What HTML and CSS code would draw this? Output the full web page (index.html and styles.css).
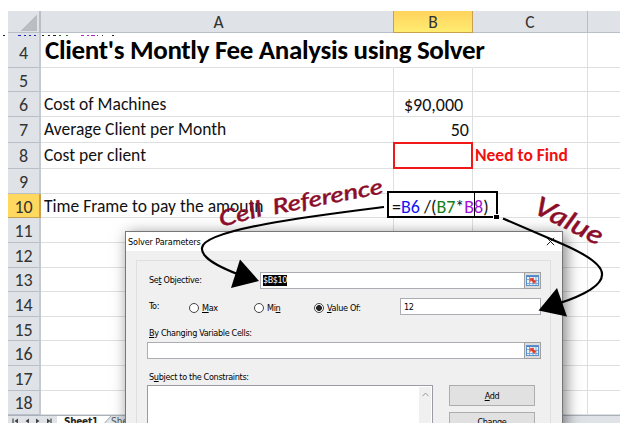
FILE: index.html
```html
<!DOCTYPE html>
<html lang="en">
<head>
<meta charset="utf-8">
<title>Client's Montly Fee Analysis using Solver</title>
<link rel="stylesheet" href="styles.css">
</head>
<body>
<main class="shot">
  <div class="sheet">
    <div class="row head"><b class="corner"></b><span>A</span><span class="active">B</span><span>C</span><span></span></div>
    <div class="row title"><b>4</b><span><strong>Client's Montly Fee Analysis using Solver</strong></span><span></span><span></span><span></span></div>
    <div class="row r5"><b>5</b><span></span><span></span><span></span><span></span></div>
    <div class="row r6"><b>6</b><span>Cost of Machines</span><span class="money">$90,000</span><span></span><span></span></div>
    <div class="row r7"><b>7</b><span class="avg">Average Client per Month</span><span class="num">50</span><span></span><span></span></div>
    <div class="row r8"><b>8</b><span>Cost per client</span><span class="find"></span><span class="need">Need to Find</span><span></span></div>
    <div class="row r9"><b>9</b><span></span><span></span><span></span><span></span></div>
    <div class="row r10"><b class="active">10</b><span class="time">Time Frame to pay the amoutn</span><span></span><span></span><span></span></div>
    <div class="row r11"><b>11</b><span></span><span></span><span></span><span></span></div>
    <div class="row"><b>12</b><span></span><span></span><span></span><span></span></div>
    <div class="row"><b>13</b><span></span><span></span><span></span><span></span></div>
    <div class="row"><b>14</b><span></span><span></span><span></span><span></span></div>
    <div class="row"><b>15</b><span></span><span></span><span></span><span></span></div>
    <div class="row"><b>16</b><span></span><span></span><span></span><span></span></div>
    <div class="row"><b>17</b><span></span><span></span><span></span><span></span></div>
    <div class="row"><b>18</b><span></span><span></span><span></span><span></span></div>
    <div class="tabs">
      <svg class="nav" width="49" height="10" viewBox="0 0 49 10"><path d="M5 2.500v5M43 2.500v5" stroke="#444" stroke-width="1.200"/><path d="M10 2.500v5L6.500 5zM21 2.500v5L17.500 5zM28 2.500v5L31.500 5zM39 2.500v5L42.500 5z" fill="#444"/></svg>
      <span class="tab on">Sheet1</span>
      <svg class="slope" width="9" height="10" viewBox="0 0 9 10"><path d="M0 10 9 0V10z" fill="#e3e7ec"/><path d="M0 10 9 0" stroke="#9aa3ad"/></svg>
      <span class="tab">Sheet2</span>
    </div>
  </div>

  <section class="dialog">
    <header><span>Solver Parameters</span><svg width="9" height="9" viewBox="0 0 9 9"><path d="M.8.8l7.400 7.400M8.200.8.8 8.200" stroke="#222" fill="none"/></svg></header>
    <div class="pane">
      <div class="line objective"><label>Se<u>t</u> Objective:</label><div class="field"><mark>$B$10</mark><i class="pick"><svg width="13" height="11" viewBox="0 0 13 11"><use href="#range"/></svg></i></div></div>
      <div class="line to"><label>To:</label>
        <div class="opt max"><i></i><span><u>M</u>ax</span></div>
        <div class="opt min"><i></i><span>Mi<u>n</u></span></div>
        <div class="opt val"><i class="on"></i><span><u>V</u>alue Of:</span></div>
        <div class="field"><span>12</span></div>
      </div>
      <div class="caption changing"><u>B</u>y Changing Variable Cells:</div>
      <div class="field wide"><i class="pick"><svg width="13" height="11" viewBox="0 0 13 11"><use href="#range"/></svg></i></div>
      <div class="caption subject">S<u>u</u>bject to the Constraints:</div>
      <div class="bottom">
        <div class="list"><div class="scroll"><svg width="7" height="5" viewBox="0 0 7 5"><path d="M.5 4.200 3.500 1l3 3.200" fill="none" stroke="#999"/></svg></div></div>
        <div class="buttons"><div class="button"><span><u>A</u>dd</span></div><div class="button"><span><u>C</u>hange</span></div></div>
      </div>
    </div>
  </section>
</main>

<svg class="notes" width="628" height="442" viewBox="0 0 628 442">
  <defs>
    <g id="range">
      <rect x=".5" y=".5" width="12" height="10" fill="#e9f2fb" stroke="#5c91cb"/>
      <path d="M1 1.500h11" stroke="#4e86c6"/>
      <path d="M1 4.500h3M1 8.500h11M9 5.500h3M3.500 2v8M7 7v3M10 2v8" stroke="#7ba9d8"/>
      <path d="M4 3.500l4-.5-1 1 3 2.500-2 2-2.500-3-1 1z" fill="#df3b2b" stroke="#df3b2b" stroke-width=".5"/>
    </g>
  </defs>
  <path d="M18 35.500h3M24 35.500h2M29 35.500h2M34 35.500h2" stroke="#22c"/>
  <path d="M42 35.500h2M48 35.500h2M53 35.500h3M102 35.500h1M112 35.500h2M3 35.500h2" stroke="#222"/>
  <path d="M59 35.500h2M66 35.500h2" stroke="#272"/>
  <path d="M81 35.500h3M87 35.500h2M91 35.500h4M97 35.500h1" stroke="#a2c"/>
  <path d="M384 207C320 215 203 229 202 248C201 258 219 267 240 275" fill="none" stroke="#000" stroke-width="2.200"/>
  <path d="M240 259.500 259 281 231 288z"/>
  <path d="M503 218.500 560 243Q602 261 602 274Q603 289 557 304" fill="none" stroke="#000" stroke-width="2.200"/>
  <path d="M557 288 538.500 310.500 567 316.500z"/>
  <g class="script">
    <text font-size="22" textLength="44" lengthAdjust="spacingAndGlyphs" transform="translate(221 227) rotate(-15)">Cell</text>
    <text font-size="21" textLength="112" lengthAdjust="spacingAndGlyphs" transform="translate(274 214.500) rotate(-11)">Reference</text>
    <text font-size="26" textLength="74" lengthAdjust="spacingAndGlyphs" transform="translate(532 212) rotate(27)">Value</text>
  </g>
</svg>
<div class="formula"><span>=<em class="blue">B6 </em>/(<em class="green">B7</em>*<em class="purple">B8</em>)</span><i class="caret"></i><i class="handle"></i></div>
</body>
</html>
```
FILE: styles.css
```css
* { box-sizing: border-box; }
body { margin: 0; background: #fff; width: 628px; height: 442px; overflow: hidden; position: relative; font-family: Carlito, Lato, sans-serif; color: #111; }
em, i { font-style: normal; }
.shot { position: relative; margin: 11px 0 0 8px; width: 612px; height: 412px; overflow: hidden; }

.row { display: grid; grid-template-columns: 33px 353px 79px 115px 32px; height: 24.600px; font-size: 17.500px; line-height: 1; white-space: nowrap; }
.row > * { display: flex; align-items: center; padding-top: 2px; border-right: 1px solid #dedfe0; border-bottom: 1px solid #dedfe0; }
.row > b { justify-content: center; background: #dfe3e8; border-right: 2px solid #c5cad1; border-bottom-color: #b8bfc8; font-weight: 400; color: #333; font-size: 18px; }
.row > span:last-child { border-right: 0; }
.row > span:nth-child(2) { padding-left: 3px; }
.head { height: 22px; }
.head > span, .head > b { justify-content: center; background: #dfe2e7; border-color: #b9bfc7; color: #333; }
.head > .active { background: linear-gradient(#ffd35c, #ffec72); border-color: #c9a04e; box-shadow: -1px 0 #c9a04e; }
.row > .active { border-color: #c9a04e; }
.row > b.active { background: #ffd95f; }
.corner::after { content: ""; width: 16px; height: 16px; margin-left: 10px; background: linear-gradient(135deg, transparent 50%, #babec3 50%); }
.title { height: 35px; }
.title > b { padding-top: 5px; }
.title > span { border-right-color: transparent; }
.title > span:nth-child(4) { border-right-color: #dedfe0; }
.title strong { font-size: 27px; letter-spacing: -.33px; margin: -3px 0 0 1px; width: 0; color: #000; }
.r5 { height: 24px; }
.r6 { height: 25px; }
.r7, .r8 { height: 26px; }
.r7 > *, .r8 > * { padding-top: 1px; }
.r9 { height: 25px; }
.r10 { height: 24px; }
.r11 { height: 25px; }
.row > .money { padding-left: 10px; font-size: 18px; }
.row > .num { justify-content: flex-end; padding-right: 3px; font-size: 18px; }
.row > .find { border: 2px solid #f01818; margin: -1px 0 0 -1px; }
.row > .need { color: #f01010; font-weight: 700; padding-left: 2px; }
.tabs { display: flex; height: 10px; background: #dfe3e8; font-size: 11px; line-height: 12px; overflow: hidden; border-top: 1px solid #aab1ba; }
.tab { color: #555; font-family: "DejaVu Sans Condensed", sans-serif; font-size: 10px; }
.tab.on { background: #fff; color: #222; font-weight: 700; padding-left: 7px; width: 45px; letter-spacing: -.3px; }
.slope { background: #fff; }

.dialog { position: absolute; left: 117px; top: 220px; width: 438px; height: 200px; background: #f0f0f0; border: 1px solid #777; box-shadow: 3px 3px 14px rgba(0, 0, 0, .5); font-family: "DejaVu Sans Condensed", "DejaVu Sans", sans-serif; font-stretch: condensed; font-size: 9px; letter-spacing: -.32px; line-height: 12px; white-space: nowrap; color: #000; }
.dialog header { display: flex; justify-content: space-between; align-items: center; height: 19px; padding: 0 7px 0 2px; background: #fff; letter-spacing: -.1px; }
.dialog u { text-underline-offset: 1px; }
.pane { margin: 9px 11px 0 10px; height: 190px; padding: 11px 9px 0 10px; border: 1px solid #dfdfdf; }
.line { display: flex; align-items: center; height: 17px; }
.objective label { width: 112px; padding: 0 0 1px 2px; }
.field { flex: 1; position: relative; height: 17px; display: flex; align-items: center; padding-left: 2px; background: #fff; border: 1px solid #abadb3; }
.objective .field { margin-left: 1px; }
.dialog mark { background: #000; color: #fff; height: 11px; line-height: 11px; letter-spacing: -.46px; }
.pick { margin: -1px -1px -1px auto; width: 17px; height: 17px; display: grid; place-items: center; background: #ddd; border: 1px solid #a0a0a0; }
.to { margin-top: 9px; }
.to label { width: 42px; padding: 0 0 1px 2px; }
.to .field { padding-left: 3px; }
.opt { display: flex; align-items: center; gap: 3px; padding-top: 3px; }
.opt i { width: 10px; height: 10px; border-radius: 50%; border: 1px solid #444; background: #fff; }
.opt .on { background: radial-gradient(circle, #222 2.600px, #fff 3.200px); }
.max { width: 65px; }
.min { width: 60px; }
.val { width: 86px; letter-spacing: -.3px; }
.changing { margin: 12px 0 3px 2px; }
.wide { flex: none; }
.subject { margin: 12px 0 2px 2px; }
.bottom { display: flex; gap: 16px; }
.list { width: 286px; height: 70px; border: 1px solid #9a9ca2; background: #fff; display: flex; justify-content: flex-end; padding: 1px; }
.scroll { width: 12px; background: #f0f0f0; text-align: center; line-height: 14px; }
.buttons { display: grid; gap: 6px; align-content: start; width: 86px; }
.button { display: grid; place-items: center; height: 21px; background: #e1e1e1; border: 1px solid #adadad; }
.button + .button span { margin-top: -2px; }

.notes { position: absolute; left: 0; top: 0; }
.script { fill: #8c0d2a; font-family: Lato, sans-serif; font-style: italic; font-weight: 500; stroke: #8c0d2a; stroke-width: .4px; }
.formula { position: absolute; left: 387px; top: 191px; width: 111px; height: 27px; border: 2px solid #000; background: #fff; padding: 4px 0 0 3px; font-size: 18px; line-height: 20px; white-space: nowrap; }
.blue { color: #1414f0; }
.green { color: #128012; }
.purple { color: #a010d8; }
.caret { position: absolute; left: 85px; top: 0; width: 1px; height: 23px; background: #000; }
.handle { position: absolute; right: -3px; bottom: -3px; width: 6px; height: 5px; background: #000; border: solid #fff; border-width: 1px 0 0 1px; }
```
